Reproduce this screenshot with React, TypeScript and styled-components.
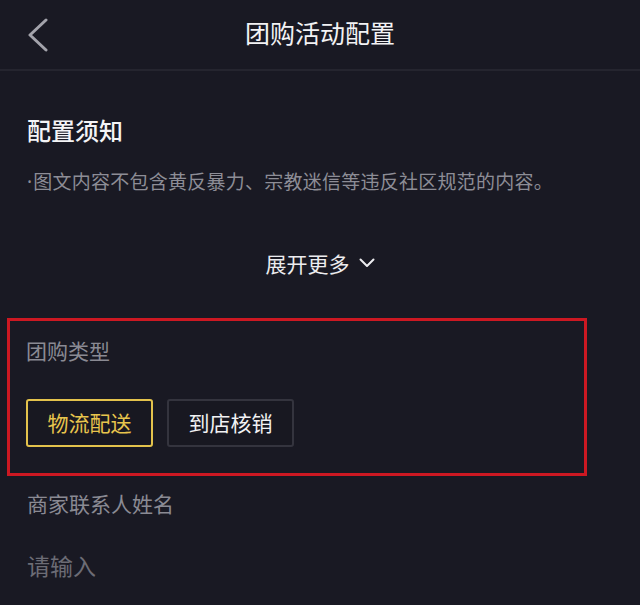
import React from "react";
import styled, { createGlobalStyle } from "styled-components";

const GlobalStyle = createGlobalStyle`
  html, body {
    margin: 0;
    padding: 0;
    background: #191923;
  }
  body {
    font-family: "Noto Sans CJK SC", "Noto Sans", sans-serif;
  }
  * { box-sizing: border-box; }
`;

const Page = styled.div`
  width: 640px;
  height: 605px;
  background: #191923;
  overflow: hidden;
  display: flex;
  flex-direction: column;
`;

const Header = styled.header`
  position: relative;
  height: 71px;
  border-bottom: 2px solid #25252f;
  display: flex;
  align-items: center;
  justify-content: center;
`;

const BackButton = styled.button`
  position: absolute;
  left: 24px;
  top: 16px;
  width: 28px;
  height: 38px;
  padding: 0;
  border: none;
  background: transparent;
  display: flex;
  align-items: center;
  justify-content: center;
`;

const HeaderTitle = styled.h1`
  margin: 0 0 4px;
  font-size: 25px;
  line-height: 65px;
  font-weight: 400;
  color: #f2f2f4;
`;

const Section = styled.section`
  padding: 0 27px;
  display: flex;
  flex-direction: column;
`;

const NoticeTitle = styled.h2`
  margin: 43px 0 0;
  font-size: 24px;
  line-height: 32px;
  font-weight: 500;
  color: #f4f4f6;
`;

const NoticeText = styled.p`
  margin: 22px 0 0;
  font-size: 19px;
  line-height: 26px;
  letter-spacing: 0.25px;
  color: #8d8d96;
  white-space: nowrap;
`;

const Bullet = styled.span`
  font-family: "Noto Sans", sans-serif;
  margin-right: 1px;
`;

const ExpandRow = styled.button`
  margin: 53px auto 0;
  padding: 0;
  border: none;
  background: transparent;
  display: flex;
  align-items: center;
  gap: 9px;
  font-family: inherit;
  font-size: 21px;
  line-height: 30px;
  color: #ececef;
`;

const HighlightBox = styled.div`
  margin: 40px 0 0 7px;
  width: 580px;
  border: 3px solid #cc1822;
  padding: 15px 17px 26px 16px;
  display: flex;
  flex-direction: column;
`;

const FieldLabel = styled.div<{ $top?: number }>`
  margin-top: ${(p) => p.$top ?? 0}px;
  font-size: 21px;
  line-height: 28px;
  color: #8a8a93;
`;

const OptionRow = styled.div`
  margin-top: 35px;
  display: flex;
  gap: 14px;
`;

const OptionButton = styled.button<{ $active?: boolean }>`
  width: 127px;
  height: 48px;
  padding: 0 0 2px;
  border-radius: 3px;
  border: 2px solid ${(p) => (p.$active ? "#e3c24c" : "#34343e")};
  background: #181821;
  color: ${(p) => (p.$active ? "#e8c54d" : "#f2f2f4")};
  font-family: inherit;
  font-size: 21px;
  line-height: 42px;
`;

const Placeholder = styled.div`
  margin-top: 33px;
  font-size: 23px;
  line-height: 30px;
  color: #6c6c75;
`;

export default function App() {
  return (
    <>
      <GlobalStyle />
      <Page>
        <Header>
          <BackButton aria-label="返回">
            <svg width="22" height="34" viewBox="0 0 22 34" fill="none">
              <polyline
                points="19,2 3,17 19,32"
                stroke="#a3a3ab"
                strokeWidth="3"
                strokeLinecap="round"
                strokeLinejoin="round"
              />
            </svg>
          </BackButton>
          <HeaderTitle>团购活动配置</HeaderTitle>
        </Header>
        <Section>
          <NoticeTitle>配置须知</NoticeTitle>
          <NoticeText>
            <Bullet>·</Bullet>图文内容不包含黄反暴力、宗教迷信等违反社区规范的内容。
          </NoticeText>
          <ExpandRow>
            展开更多
            <svg width="16" height="10" viewBox="0 0 16 10" fill="none">
              <polyline
                points="1.5,1.5 8,8 14.5,1.5"
                stroke="#ececef"
                strokeWidth="2"
                strokeLinecap="round"
                strokeLinejoin="round"
              />
            </svg>
          </ExpandRow>
        </Section>
        <HighlightBox>
          <FieldLabel>团购类型</FieldLabel>
          <OptionRow>
            <OptionButton $active>物流配送</OptionButton>
            <OptionButton>到店核销</OptionButton>
          </OptionRow>
        </HighlightBox>
        <Section>
          <FieldLabel $top={13}>商家联系人姓名</FieldLabel>
          <Placeholder>请输入</Placeholder>
        </Section>
      </Page>
    </>
  );
}
